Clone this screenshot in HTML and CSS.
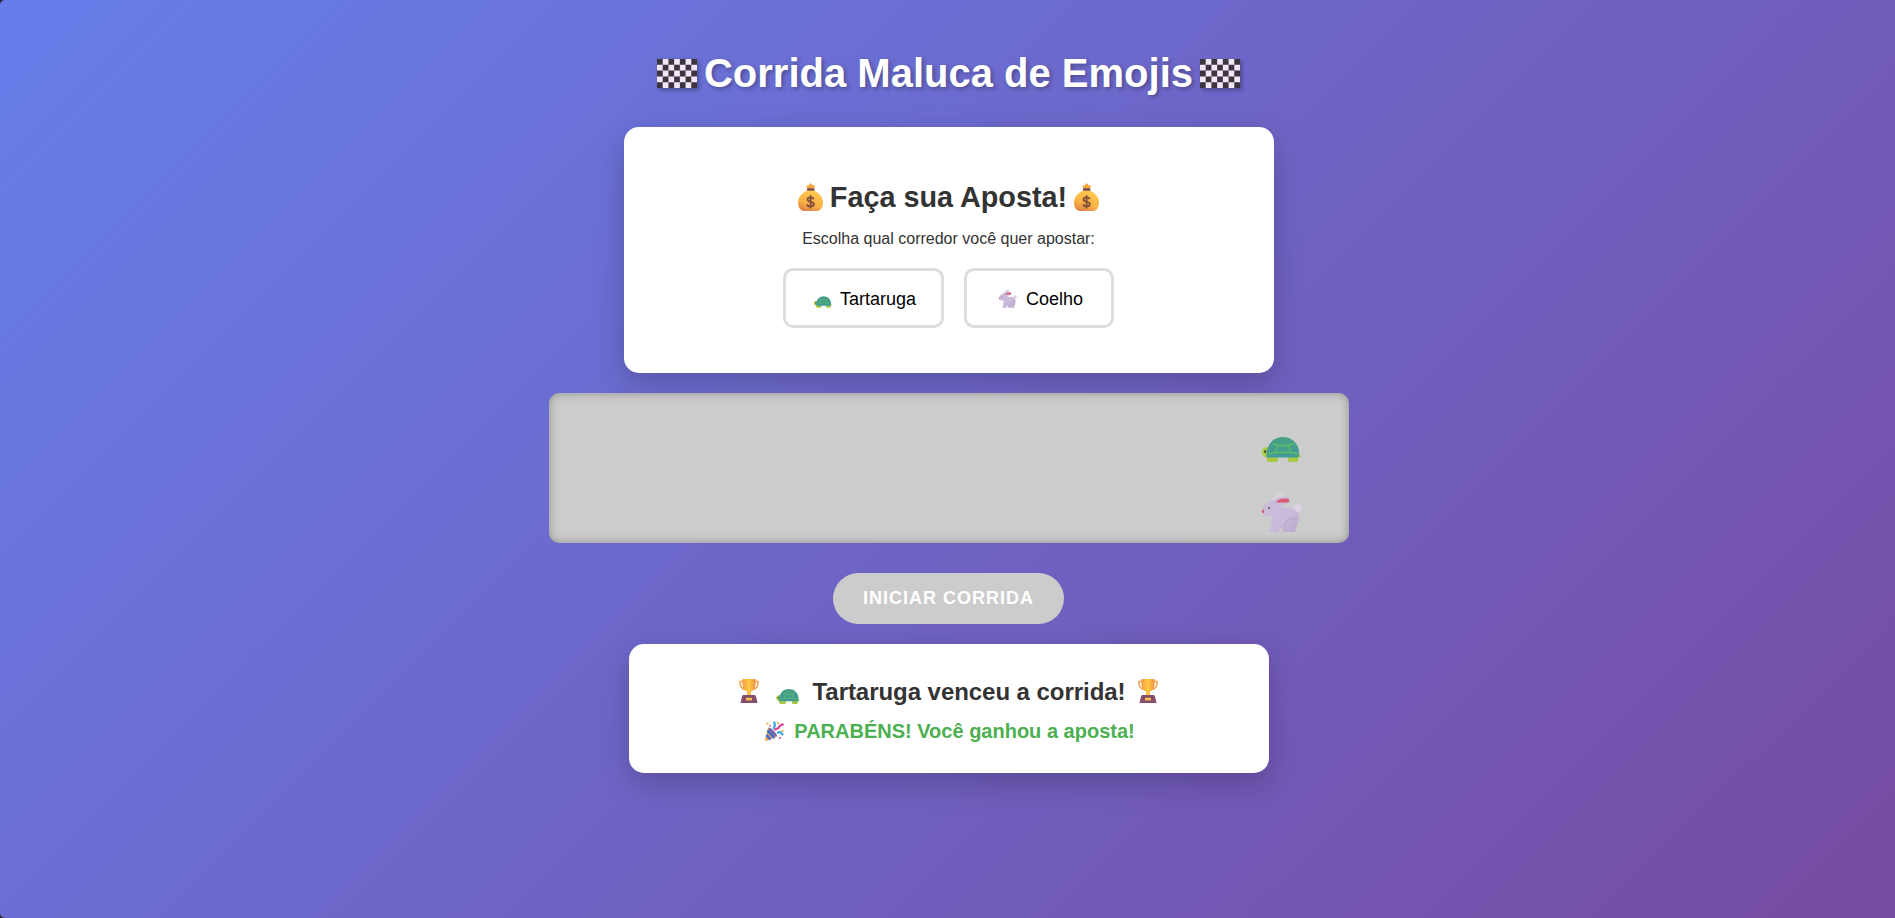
FILE: index.html
```html
<!DOCTYPE html>
<html lang="pt-BR">
<head>
<meta charset="UTF-8">
<title>Corrida Maluca de Emojis</title>
<link rel="stylesheet" href="styles.css">
</head>
<body>
<svg class="defs" width="0" height="0" aria-hidden="true">
  <defs>
    <linearGradient id="gold" x1=".7" y1="0" x2=".3" y2="1"><stop offset="0" stop-color="#ffcb4c"/><stop offset=".65" stop-color="#fbb146"/><stop offset="1" stop-color="#df8045"/></linearGradient>
    <linearGradient id="shell" x1="0" y1="0" x2="0" y2="1"><stop offset="0" stop-color="#48a084"/><stop offset="1" stop-color="#419c98"/></linearGradient>
    <linearGradient id="fur" x1="0" y1="0" x2="1" y2="1"><stop offset="0" stop-color="#c9bbd9"/><stop offset=".6" stop-color="#c9bcda"/><stop offset="1" stop-color="#b9a6cd"/></linearGradient>
    <linearGradient id="cup" x1="0" y1="0" x2="1" y2="0"><stop offset="0" stop-color="#f59a42"/><stop offset=".5" stop-color="#ffcb43"/><stop offset="1" stop-color="#f28e45"/></linearGradient>
    <symbol id="flag" viewBox="0 0 40 29">
      <rect width="40" height="29" rx="2" fill="#f3e5fa"/>
      <path fill="none" stroke="#3b353e" stroke-width="5.800" stroke-dasharray="5.714 5.714" d="M0 2.900h40M0 14.500h40M0 26.100h40M5.714 8.700H40M5.714 20.300H40"/>
    </symbol>
    <symbol id="bag" viewBox="0 0 25 28">
      <path fill="#f6a83b" d="M9.500 6 8 2.500l2.300.3 2.200-2.800 2.500 2.600 2.500-.2L15.500 6z"/>
      <path fill="url(#gold)" d="M9 7.500h7C21 10 25 14 25 19.500 25 25.500 22 28 18 28H7c-4 0-7-2.500-7-8.500C0 14 4 10 9 7.500z"/>
      <rect x="9" y="5.300" width="7.500" height="2.500" rx=".8" fill="#7d4c4c"/>
      <path fill="none" stroke="#83503f" stroke-width="1.900" d="M15.700 16.200c-.4-1.300-1.700-1.800-3.200-1.800-1.700 0-3 .8-3 2.200 0 3.200 6.400 1.300 6.400 4.500 0 1.500-1.400 2.300-3.200 2.300-1.900 0-3.200-.8-3.600-2.200M12.600 12.300v13.200"/>
    </symbol>
    <symbol id="turtle" viewBox="0 0 39 25">
      <path fill="#a9cf3f" d="M36 16c1 2 3 2 3 4h-6zM7 11C3 9 0 11 0 15c0 4 3 5 6 6h3z"/>
      <path fill="#a8c83f" d="M5 19h11v4c0 1-1 2-2 2H7c-2 0-2-2-2-3zM26 19h11l-1 4c0 1-1 2-2 2h-6c-1 0-2-1-2-2z"/>
      <path fill="url(#shell)" d="M4.500 19C4 8 11 0 21 0s17 8 16 18c0 1.500-.5 2.500-2 2.500H6c-1 0-1.500-.5-1.500-1.500z"/>
      <path fill="none" stroke="#62bd62" stroke-width="1.300" d="M11 6c1.500 1.500 3 2 5 2.500h10c2-.5 4-1 5.500-2.500M16 8.500l-2.500 7M26 8.500l3 7M6 17.500c2-1.500 5-2 7.500-2H29c3 0 5 .5 7 2"/>
      <ellipse cx="3.200" cy="14.500" rx="1" ry="1.500" fill="#3d4237"/>
    </symbol>
    <symbol id="rabbit" viewBox="0 0 40 41">
      <path fill="#d8d1dc" d="M9 11C11 5 17 0 21 1c3 2-1 7-5 11z"/>
      <circle cx="35.500" cy="17" r="4" fill="#dcd2e6"/>
      <path fill="url(#fur)" d="M0 21C1 14 6 9 12 9c2-2 6-3 12-3 5 0 5 6 0 7l-5 1c0 2 1 3 4 3 8-1 14 3 14 10 0 4-2 8-4 11 2 1 1 3-1 3h-9c-3 0-4-2-3-4h-4c2 1 2 4 0 4H9c-3 0-3-3 0-4l1-12C4 25 0 24 0 21z"/>
      <path fill="#d9596d" d="M14 11.500C16 8 19 7.500 25 7.500c3 0 3 4 0 4zM.3 18.500c2 0 2.500 2 1 3.700C-.2 22 0 20 .3 18.500z"/>
      <path fill="none" stroke="#b29fca" stroke-width="1" d="M34 28c-6-2-12 3-11 8"/>
      <circle cx="7" cy="17" r="1.100" fill="#665a6f"/>
    </symbol>
    <symbol id="trophy" viewBox="0 0 20 24">
      <path fill="none" stroke="#f2a045" stroke-width="1.500" d="M5 2.500H1C.5 7 3 10.500 7 10.500M15 2.500h4c.5 4.500-2 8-6 8"/>
      <path fill="url(#cup)" d="M3.500 0h13c.6 7-.5 11-4.500 12.500V16h-4v-3.500C4 11 3 7 3.500 0z"/>
      <path fill="#854d68" d="M4.500 16h11c1.500 0 1.500 2 2 3.500L18.500 24h-17l1-4.500C3 18 3 16 4.500 16z"/>
      <rect x="7" y="18.800" width="6" height="2.600" fill="#f7c351"/>
    </symbol>
    <symbol id="party" viewBox="0 0 19 20">
      <path fill="#f5a83c" d="M3 6.500C6 8 10 11 12 15.500L1 20c-1 0-1-1-.8-2z"/>
      <path stroke="#456fd2" stroke-width="2.600" d="m2.500 9.500 7 7.500M1.300 14l4.200 4.500"/>
      <ellipse cx="7.700" cy="11" rx="1.600" ry="6" fill="#7a62a8" transform="rotate(-43 7.700 11)"/>
      <path fill="none" stroke="#35a7e5" stroke-width="2.200" d="M8 8c2-2 2.500-4 1-7.500M12 12c3-2 4-.5 6 2"/>
      <path fill="none" stroke="#e33c91" stroke-width="2.200" d="M10 9.500c1-4 3 0 4-3.500 1-2 3-2 4.500-3"/>
      <path fill="#eab342" d="M1.500 1.500h2v2h-2zM12 1h2v2h-2zM16.500 9h2v2h-2z"/><path fill="#df4496" d="M4.500 4h1.500v1.500H4.500zM14 16h1.700v1.700H14z"/>
    </symbol>
  </defs>
</svg>
<main class="page">
  <h1 class="title"><svg class="flag"><use href="#flag"/></svg><span>Corrida Maluca de Emojis</span><svg class="flag"><use href="#flag"/></svg></h1>
  <section class="bet">
    <h2 class="bet-title"><svg class="bag"><use href="#bag"/></svg><span>Faça sua Aposta!</span><svg class="bag"><use href="#bag"/></svg></h2>
    <p class="bet-text">Escolha qual corredor você quer apostar:</p>
    <div class="options">
      <button class="option turtle-option"><svg class="turtle-small"><use href="#turtle"/></svg><span>Tartaruga</span></button>
      <button class="option rabbit-option"><svg class="rabbit-small"><use href="#rabbit"/></svg><span>Coelho</span></button>
    </div>
  </section>
  <section class="track">
    <svg class="runner-turtle"><use href="#turtle"/></svg>
    <svg class="runner-rabbit"><use href="#rabbit"/></svg>
  </section>
  <button class="start" disabled>INICIAR CORRIDA</button>
  <section class="result">
    <div class="winner"><svg class="trophy"><use href="#trophy"/></svg><svg class="turtle-medium"><use href="#turtle"/></svg><span>Tartaruga venceu a corrida!</span><svg class="trophy trophy-end"><use href="#trophy"/></svg></div>
    <div class="congrats"><svg class="party"><use href="#party"/></svg><span>PARABÉNS! Você ganhou a aposta!</span></div>
  </section>
</main>
</body>
</html>
```
FILE: styles.css
```css
* { box-sizing: border-box; }
html { background: #26262b; }
body {
  margin: 0;
  font-family: Arial, "Liberation Sans", sans-serif;
  color: #333;
  background: linear-gradient(135deg, #667eea 0%, #764ba2 100%);
  border-radius: 5px 0 0 5px;
  height: 918px;
  overflow: hidden;
}
.defs { position: absolute; }
svg { display: block; flex: none; }
.page { display: flex; flex-direction: column; align-items: center; padding: 50px 0 0 2px; }
.title { display: flex; align-items: center; gap: 7px; height: 46px; margin: 0 0 31px; font-size: 40px; line-height: 46px; color: #fff; text-shadow: 2px 2px 4px rgba(0,0,0,.3); white-space: nowrap; }
.flag { width: 40px; height: 29px; filter: drop-shadow(2px 2px 2px rgba(0,0,0,.3)); }
.bet { display: flex; flex-direction: column; align-items: center; width: 650px; height: 246px; padding-top: 53px; background: #fff; border-radius: 15px; box-shadow: 0 10px 30px rgba(0,0,0,.2); }
.bet-title { display: flex; gap: 7px; margin: 0; font-size: 28.8px; line-height: 34px; white-space: nowrap; }
.bag { width: 25px; height: 28px; margin-top: 3px; }
.bet-text { margin: 16px 0 20px; font-size: 16px; line-height: 18px; }
.options { display: flex; gap: 20px; }
.option { display: flex; height: 60px; padding: 0; border: 3px solid #ddd; border-radius: 10px; background: #fff; color: #000; font: 18px/20px Arial, "Liberation Sans", sans-serif; }
.option span { padding-top: 18px; }
.turtle-option { width: 161px; padding-left: 28px; gap: 8px; }
.rabbit-option { width: 150px; padding-left: 32px; gap: 9px; }
.turtle-small { width: 18px; height: 12px; margin-top: 25px; }
.rabbit-small { width: 18px; height: 19px; margin-top: 18px; }
.track { display: flex; flex-direction: column; align-items: flex-end; width: 800px; height: 150px; margin-top: 20px; padding: 44px 47px 0 0; background: #ccc; border-radius: 10px; box-shadow: inset 0 0 10px rgba(0,0,0,.3); }
.runner-turtle { width: 39px; height: 25px; margin-right: 1px; }
.runner-rabbit { width: 40px; height: 41px; margin-top: 29px; }
.start { width: 231px; height: 51px; margin: 30px 0 20px; padding: 0 0 2px; border: 0; border-radius: 26px; background: #ccc; color: #fff; font: bold 18px/20px Arial, "Liberation Sans", sans-serif; letter-spacing: 1px; }
.result { display: flex; flex-direction: column; align-items: center; width: 640px; height: 129px; padding-top: 34px; background: #fff; border-radius: 15px; box-shadow: 0 10px 30px rgba(0,0,0,.2); font-weight: bold; white-space: nowrap; }
.winner { display: flex; font-size: 24px; line-height: 28px; letter-spacing: -.05px; }
.trophy { width: 20px; height: 24px; margin: 1px 17px 0 0; }
.turtle-medium { width: 24px; height: 15px; margin: 11px 13px 0 0; }
.trophy-end { margin: 1px 0 0 13px; }
.congrats { display: flex; gap: 10px; margin-top: 13px; padding-left: 3px; font-size: 20px; line-height: 24px; color: #4caf50; }
.party { width: 19px; height: 20px; margin-top: 2px; }
```
